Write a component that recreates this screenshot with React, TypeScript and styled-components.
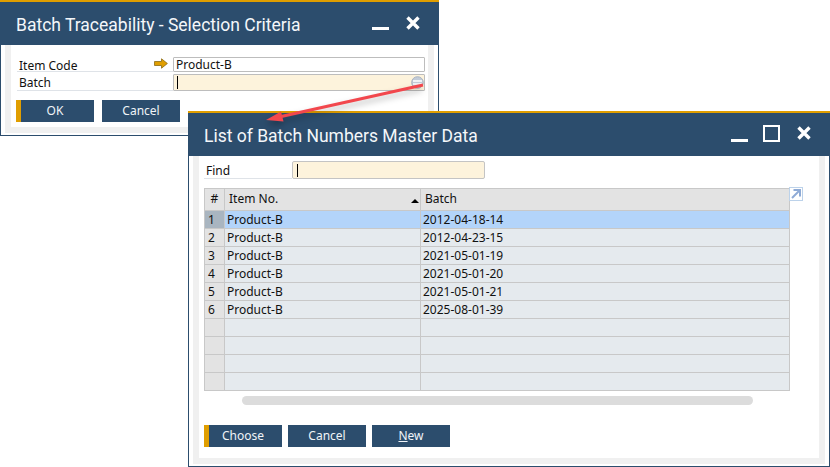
import styled, { createGlobalStyle } from 'styled-components'

const NAVY = '#2c4d6d'
const AMBER = '#e09e00'

const rows = [
  ['1', 'Product-B', '2012-04-18-14'],
  ['2', 'Product-B', '2012-04-23-15'],
  ['3', 'Product-B', '2021-05-01-19'],
  ['4', 'Product-B', '2021-05-01-20'],
  ['5', 'Product-B', '2021-05-01-21'],
  ['6', 'Product-B', '2025-08-01-39'],
  ['', '', ''],
  ['', '', ''],
  ['', '', ''],
  ['', '', ''],
]

function MinimizeIcon() {
  return (
    <svg width="17" height="3" viewBox="0 0 17 3">
      <rect width="17" height="3" fill="#fff" />
    </svg>
  )
}

function MaximizeIcon() {
  return (
    <svg width="17" height="17" viewBox="0 0 17 17">
      <rect x="1" y="1" width="15" height="15" fill="none" stroke="#fff" strokeWidth="2" />
    </svg>
  )
}

function CloseIcon() {
  return (
    <svg width="14" height="14" viewBox="0 0 14 14">
      <path d="M1.5 1.5L12.5 12.5M12.5 1.5L1.5 12.5" stroke="#fff" strokeWidth="3.4" />
    </svg>
  )
}

function LinkArrow() {
  return (
    <svg width="14" height="11" viewBox="0 0 14 11">
      <path
        d="M0.5 3.5H7.5V0.8L13.4 5.5L7.5 10.2V7.5H0.5Z"
        fill={AMBER}
        stroke="#8a6a14"
        strokeWidth="0.8"
      />
    </svg>
  )
}

function LookupIcon() {
  return (
    <svg width="13" height="13" viewBox="0 0 13 13">
      <circle cx="6.5" cy="6.5" r="5.8" fill="#c3ccd8" stroke="#a8b2c0" />
      <path d="M2 5H11M2 8H11" stroke="#fff" strokeWidth="1.4" />
    </svg>
  )
}

function ExpandIcon() {
  return (
    <svg width="14" height="14" viewBox="0 0 14 14">
      <rect x="0.5" y="0.5" width="13" height="13" fill="#fff" stroke="#bcd2ea" />
      <path d="M3 11L10 4M4.5 3H11V9.5" fill="none" stroke="#8fabd6" strokeWidth="2" />
    </svg>
  )
}

export default function App() {
  return (
    <Desktop>
      <GlobalStyle />
      <Window $left={0} $top={0} $width={439} $height={136}>
        <TitleBar>
          <Title>Batch Traceability - Selection Criteria</Title>
          <SmallControls>
            <MinControl>
              <MinimizeIcon />
            </MinControl>
            <CloseControl>
              <CloseIcon />
            </CloseControl>
          </SmallControls>
        </TitleBar>
        <Frame>
          <Content>
            <CriteriaForm>
              <FieldLabel>
                Item Code
                <LinkSlot>
                  <LinkArrow />
                </LinkSlot>
              </FieldLabel>
              <Input>Product-B</Input>
              <FieldLabel>Batch</FieldLabel>
              <Input $active>
                <Caret />
                <LookupSlot>
                  <LookupIcon />
                </LookupSlot>
              </Input>
            </CriteriaForm>
            <ButtonRow $gap={8} $top={9}>
              <ActionButton $primary>OK</ActionButton>
              <ActionButton>Cancel</ActionButton>
            </ButtonRow>
          </Content>
        </Frame>
      </Window>

      <Window $left={188} $top={111} $width={642} $height={356}>
        <TitleBar>
          <Title>List of Batch Numbers Master Data</Title>
          <LargeControls>
            <MinControl>
              <MinimizeIcon />
            </MinControl>
            <MaximizeIcon />
            <CloseControl>
              <CloseIcon />
            </CloseControl>
          </LargeControls>
        </TitleBar>
        <Frame>
          <ListContent>
            <FindRow>
              <FindLabel>Find</FindLabel>
              <FindInput>
                <Caret />
              </FindInput>
            </FindRow>
            <GridArea>
              <Grid>
                <colgroup>
                  <col width="20" />
                  <col width="196" />
                  <col width="369" />
                </colgroup>
                <thead>
                  <tr>
                    <HeadCell $centered>#</HeadCell>
                    <HeadCell>
                      Item No.
                      <SortMark />
                    </HeadCell>
                    <HeadCell>Batch</HeadCell>
                  </tr>
                </thead>
                <tbody>
                  {rows.map((row, i) => (
                    <tr key={i}>
                      <IndexCell $selected={i === 0}>{row[0]}</IndexCell>
                      <Cell $selected={i === 0}>{row[1]}</Cell>
                      <Cell $selected={i === 0}>{row[2]}</Cell>
                    </tr>
                  ))}
                </tbody>
              </Grid>
              <ExpandSlot>
                <ExpandIcon />
              </ExpandSlot>
            </GridArea>
            <ScrollTrack />
            <ButtonRow $gap={6} $top={20}>
              <ActionButton $primary>Choose</ActionButton>
              <ActionButton>Cancel</ActionButton>
              <ActionButton>
                <u>N</u>ew
              </ActionButton>
            </ButtonRow>
          </ListContent>
        </Frame>
      </Window>

      <Callout width="830" height="467" viewBox="0 0 830 467">
        <path d="M423 85L279 117" stroke="#f2474d" strokeWidth="3.2" fill="none" />
        <path d="M266 120L281 111.5L283.5 121.5Z" fill="#f2474d" />
      </Callout>
    </Desktop>
  )
}

const GlobalStyle = createGlobalStyle`
  html, body {
    margin: 0;
    padding: 0;
    background: #fff;
  }
  body {
    font-family: "Noto Sans", "Open Sans", sans-serif;
    font-size: 12px;
    color: #111;
  }
`

const Desktop = styled.div`
  position: relative;
  width: 830px;
  height: 467px;
  overflow: hidden;
`

const Window = styled.section<{ $left: number; $top: number; $width: number; $height: number }>`
  position: absolute;
  left: ${(p) => p.$left}px;
  top: ${(p) => p.$top}px;
  width: ${(p) => p.$width}px;
  height: ${(p) => p.$height}px;
  box-sizing: border-box;
  display: flex;
  flex-direction: column;
  background: #fff;
  border: 1px solid ${NAVY};
  border-top: 0;
`

const TitleBar = styled.header`
  flex: none;
  height: 43px;
  margin: 0 -1px;
  padding: 0 0 0 16px;
  display: flex;
  align-items: center;
  justify-content: space-between;
  background: ${NAVY};
  border-top: 2px solid ${AMBER};
`

const Title = styled.h1`
  margin: 2px 0 0;
  font-family: Roboto, "Noto Sans", sans-serif;
  font-size: 17.5px;
  font-weight: 400;
  color: #f4f7fa;
  white-space: nowrap;
`

const SmallControls = styled.div`
  display: flex;
  align-items: flex-start;
  width: 67px;
  height: 14px;
  margin-top: -2px;
  gap: 15px;
`

const LargeControls = styled.div`
  display: flex;
  align-items: center;
  gap: 15px;
  margin-right: 19px;
  margin-top: -3px;
`

const MinControl = styled.span`
  display: flex;
  align-self: flex-end;
`

const CloseControl = styled.span`
  display: flex;
  margin-left: 2px;
`

const Frame = styled.div`
  flex: 1;
  display: flex;
  margin: 0 4px 2px;
  border: 6px solid #f0f0f0;
  border-top: 0;
  min-height: 0;
`

const Content = styled.div`
  flex: 1;
  padding: 12px 3px 0 5px;
  background: #fff;
`

const CriteriaForm = styled.div`
  display: grid;
  grid-template-columns: 156px 252px;
  grid-template-rows: 15px 17px;
  row-gap: 2px;
  margin-left: 1px;
`

const FieldLabel = styled.div`
  position: relative;
  padding: 1px 0 0 2px;
  line-height: 16px;
  border-bottom: 1px solid #dfe3e8;
`

const LinkSlot = styled.span`
  position: absolute;
  right: 5px;
  top: 1px;
  display: flex;
`

const Input = styled.div<{ $active?: boolean }>`
  position: relative;
  box-sizing: border-box;
  display: flex;
  align-items: center;
  padding-left: 2px;
  background: ${(p) => (p.$active ? '#fdf3dc' : '#fff')};
  border: 1px solid #bdbdbd;
  border-radius: 1px;
  line-height: 14px;
`

const Caret = styled.span`
  display: block;
  width: 1px;
  height: 13px;
  margin-left: 1px;
  background: #000;
`

const LookupSlot = styled.span`
  position: absolute;
  right: 0;
  top: 1px;
  display: flex;
`

const ButtonRow = styled.div<{ $gap: number; $top: number }>`
  display: flex;
  gap: ${(p) => p.$gap}px;
  margin-top: ${(p) => p.$top}px;
`

const ActionButton = styled.button<{ $primary?: boolean }>`
  box-sizing: border-box;
  width: 78px;
  height: 22px;
  padding: 0 5px 0 0;
  background: ${NAVY};
  border: 0;
  border-left: 5px solid ${(p) => (p.$primary ? AMBER : NAVY)};
  color: #f0f4f8;
  font: inherit;
  line-height: 20px;
`

const ListContent = styled.div`
  flex: 1;
  display: flex;
  flex-direction: column;
  padding: 5px 0 0 5px;
  background: #fff;
`

const FindRow = styled.div`
  display: flex;
  height: 18px;
`

const FindLabel = styled.div`
  box-sizing: border-box;
  width: 88px;
  padding: 1px 0 0 2px;
  line-height: 18px;
  border-bottom: 1px solid #dfe3e8;
`

const FindInput = styled.div`
  box-sizing: border-box;
  width: 193px;
  display: flex;
  align-items: center;
  padding-left: 3px;
  background: #fdf3dc;
  border: 1px solid #c4c4c4;
  border-radius: 2px;
`

const GridArea = styled.div`
  position: relative;
  margin-top: 9px;
  width: 586px;
`

const Grid = styled.table`
  width: 586px;
  table-layout: fixed;
  border-collapse: collapse;
  border: 1px solid #c8c8c8;
`

const HeadCell = styled.th<{ $centered?: boolean }>`
  position: relative;
  height: 19px;
  padding: 0 0 2px ${(p) => (p.$centered ? 0 : 4)}px;
  background: #e3e3e3;
  border: 1px solid #c8c8c8;
  font-weight: 400;
  text-align: ${(p) => (p.$centered ? 'center' : 'left')};
  line-height: 16px;
`

const SortMark = styled.span`
  position: absolute;
  right: 1px;
  bottom: 7px;
  border-left: 4px solid transparent;
  border-right: 4px solid transparent;
  border-bottom: 4px solid #000;
`

const Cell = styled.td<{ $selected?: boolean }>`
  height: 17px;
  padding: 0 0 0 2px;
  background: ${(p) => (p.$selected ? '#b3d4fa' : '#e5eaee')};
  border: 1px solid #c8c8c8;
  line-height: 14px;
  white-space: nowrap;
`

const IndexCell = styled.td<{ $selected?: boolean }>`
  height: 17px;
  padding: 0 0 0 3px;
  background: ${(p) => (p.$selected ? '#a9b5c0' : '#e3e3e3')};
  border: 1px solid #c8c8c8;
  line-height: 14px;
`

const ExpandSlot = styled.span`
  position: absolute;
  left: 585px;
  top: -1px;
  display: flex;
`

const ScrollTrack = styled.div`
  flex: none;
  width: 511px;
  height: 9px;
  margin: 5px 0 0 38px;
  background: #dcdcdc;
  border-radius: 5px;
`

const Callout = styled.svg`
  position: absolute;
  left: 0;
  top: 0;
  pointer-events: none;
  filter: drop-shadow(-1px 4px 3px rgba(0, 0, 0, 0.28));
`
